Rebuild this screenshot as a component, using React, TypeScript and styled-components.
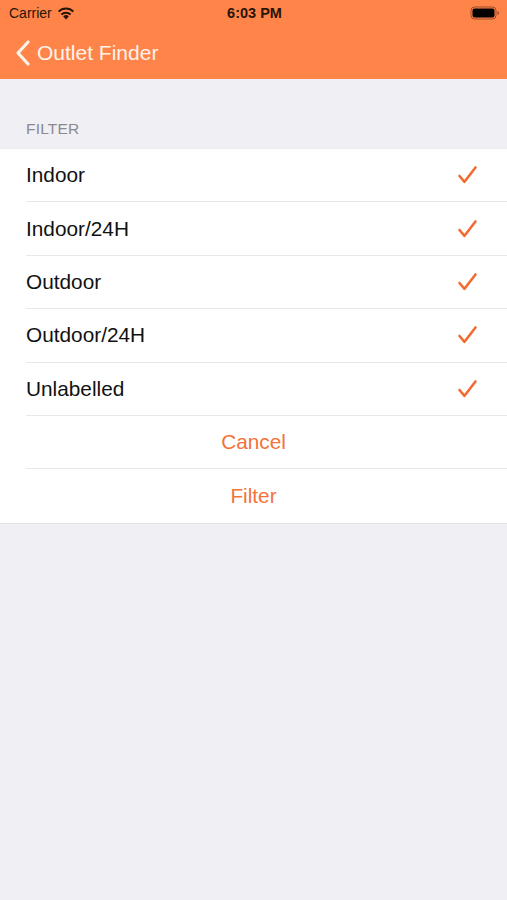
import React from "react";
import styled, { createGlobalStyle } from "styled-components";

const Global = createGlobalStyle`
  html, body { margin: 0; padding: 0; background: #efeff4; }
  body { font-family: "Liberation Sans", Arial, sans-serif; -webkit-font-smoothing: antialiased; }
`;

const Page = styled.div`
  width: 507px;
  min-height: 900px;
  background: #efeff4;
  display: flex;
  flex-direction: column;
`;

const Header = styled.header`
  background: #ff844a;
  height: 79px;
  display: flex;
  flex-direction: column;
`;

const StatusBar = styled.div`
  height: 26px;
  display: grid;
  grid-template-columns: 1fr auto 1fr;
  align-items: center;
  padding: 0 7px 0 9px;
  color: #2a1408;
  font-size: 14px;
`;

const Carrier = styled.div`
  display: flex;
  align-items: center;
  gap: 5px;
`;

const Time = styled.div`
  font-weight: 700;
  font-size: 14.5px;
`;

const BatteryWrap = styled.div`
  justify-self: end;
  display: flex;
  align-items: center;
`;

const NavBar = styled.div`
  flex: 1;
  display: flex;
  align-items: center;
  padding-left: 15px;
  gap: 6px;
  color: #fff3ea;
  font-size: 21px;
`;

const Content = styled.main`
  display: flex;
  flex-direction: column;
`;

const SectionHeader = styled.div`
  padding: 41px 26px 11px;
  font-size: 15.5px;
  color: #8a8a8f;
  letter-spacing: 0.2px;
  line-height: 17px;
`;

const Table = styled.div`
  background: #fff;
  border-top: 1px solid #ececf0;
  border-bottom: 1px solid #e2e2e6;
`;

const Row = styled.div<{ $center?: boolean; $last?: boolean }>`
  height: 53.4px;
  box-sizing: border-box;
  margin-left: 26px;
  padding-right: ${(p) => (p.$center ? "26px" : "29px")};
  display: flex;
  align-items: center;
  justify-content: ${(p) => (p.$center ? "center" : "space-between")};
  border-bottom: ${(p) => (p.$last ? "none" : "1px solid #e8e8ec")};
  font-size: 20.8px;
  color: ${(p) => (p.$center ? "#f2733a" : "#111")};
`;

const Check = () => (
  <svg width="22" height="20" viewBox="0 0 22 20">
    <path d="M3.5 11 L8.5 16.8 L19.5 2.5" fill="none" stroke="#f26b31" strokeWidth="2.6" strokeLinecap="round" strokeLinejoin="round" />
  </svg>
);

const Wifi = () => (
  <svg width="18" height="13" viewBox="0 0 18 13">
    <path d="M9 12.5 L6.2 9.4 A4 4 0 0 1 11.8 9.4 Z" fill="#2a1408" />
    <path d="M4.4 7.5 A6.6 6.6 0 0 1 13.6 7.5" fill="none" stroke="#2a1408" strokeWidth="2" />
    <path d="M1.6 4.6 A10.5 10.5 0 0 1 16.4 4.6" fill="none" stroke="#2a1408" strokeWidth="2" />
  </svg>
);

const Battery = () => (
  <svg width="30" height="14" viewBox="0 0 30 14">
    <rect x="1" y="1" width="25" height="12" rx="3.5" fill="none" stroke="#9a4a26" strokeWidth="1" />
    <rect x="2.5" y="2.5" width="22" height="9" rx="2" fill="#000" />
    <path d="M27.5 5 Q29 5.5 29 7 Q29 8.5 27.5 9 Z" fill="#9a4a26" />
  </svg>
);

const Chevron = () => (
  <svg width="16" height="26" viewBox="0 0 16 26">
    <path d="M13 2 L3 13 L13 24" fill="none" stroke="#fff3ea" strokeWidth="3.2" strokeLinecap="round" strokeLinejoin="round" />
  </svg>
);

const items = ["Indoor", "Indoor/24H", "Outdoor", "Outdoor/24H", "Unlabelled"];

export default function App() {
  return (
    <Page>
      <Global />
      <Header>
        <StatusBar>
          <Carrier>
            Carrier <Wifi />
          </Carrier>
          <Time>6:03 PM</Time>
          <BatteryWrap>
            <Battery />
          </BatteryWrap>
        </StatusBar>
        <NavBar>
          <Chevron />
          <span>Outlet Finder</span>
        </NavBar>
      </Header>
      <Content>
        <SectionHeader>FILTER</SectionHeader>
        <Table>
          {items.map((it) => (
            <Row key={it}>
              <span>{it}</span>
              <Check />
            </Row>
          ))}
          <Row $center>Cancel</Row>
          <Row $center $last>
            Filter
          </Row>
        </Table>
      </Content>
    </Page>
  );
}
